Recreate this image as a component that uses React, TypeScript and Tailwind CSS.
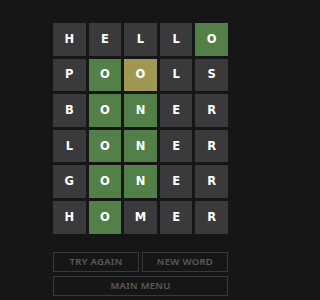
import React from 'react';

type Cell = [string, 'g' | 'y' | 'n'];

const rows: Cell[][] = [
  [['H', 'n'], ['E', 'n'], ['L', 'n'], ['L', 'n'], ['O', 'g']],
  [['P', 'n'], ['O', 'g'], ['O', 'y'], ['L', 'n'], ['S', 'n']],
  [['B', 'n'], ['O', 'g'], ['N', 'g'], ['E', 'n'], ['R', 'n']],
  [['L', 'n'], ['O', 'g'], ['N', 'g'], ['E', 'n'], ['R', 'n']],
  [['G', 'n'], ['O', 'g'], ['N', 'g'], ['E', 'n'], ['R', 'n']],
  [['H', 'n'], ['O', 'g'], ['M', 'n'], ['E', 'n'], ['R', 'n']],
];

const tileColor = {
  g: 'bg-[#538049]',
  y: 'bg-[#a09852]',
  n: 'bg-[#3a3a3c]',
};

const btn =
  "h-[20px] border border-[#3a3a3a] text-[#5c5c5c] text-[9.5px] font-semibold tracking-[0.3px] font-['Noto_Sans',sans-serif]";

export default function App() {
  return (
    <div className="w-full min-h-screen bg-[#161616] pl-[53px] pt-[23px] font-['DejaVu_Sans',sans-serif]">
      {/* Board */}
      <div className="w-[175px] grid grid-cols-5 gap-[3px]">
        {rows.flat().map(([ch, state], i) => (
          <div
            key={i}
            className={`aspect-square flex items-center justify-center text-white text-[11.5px] font-bold ${tileColor[state]}`}
          >
            {ch}
          </div>
        ))}
      </div>

      {/* Actions */}
      <div className="w-[175px] mt-[18px] grid grid-cols-2 gap-x-[3px] gap-y-[4px]">
        <button className={btn}>TRY AGAIN</button>
        <button className={btn}>NEW WORD</button>
        <button className={`col-span-2 ${btn}`}>MAIN MENU</button>
      </div>
    </div>
  );
}
